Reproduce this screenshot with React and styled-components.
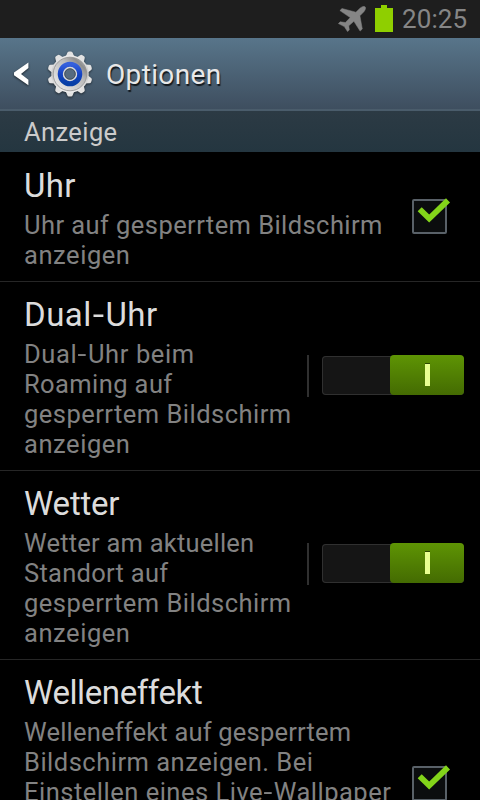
import React from 'react'
import styled, { createGlobalStyle } from 'styled-components'

const GlobalStyle = createGlobalStyle`
  * { box-sizing: border-box; }
  body {
    margin: 0;
    background: #000;
    font-family: Roboto, "Noto Sans", sans-serif;
    overflow: hidden;
  }
`

const settings = [
  {
    title: 'Uhr',
    spacing: 0.4,
    lines: [
      ['Uhr auf gesperrtem Bildschirm', 0.43],
      ['anzeigen', 0.55]
    ],
    control: 'checkbox',
    height: 130,
    top: 14
  },
  {
    title: 'Dual-Uhr',
    spacing: 0.5,
    lines: [
      ['Dual-Uhr beim', 0.6],
      ['Roaming auf', 0.4],
      ['gesperrtem Bildschirm', 0.47],
      ['anzeigen', 0.55]
    ],
    control: 'switch',
    height: 189,
    top: 13
  },
  {
    title: 'Wetter',
    spacing: -0.2,
    lines: [
      ['Wetter am aktuellen', 0.22],
      ['Standort auf', 0.28],
      ['gesperrtem Bildschirm', 0.47],
      ['anzeigen', 0.55]
    ],
    control: 'switch',
    height: 189,
    top: 13,
    lift: 2
  },
  {
    title: 'Welleneffekt',
    spacing: -0.4,
    lines: [
      ['Welleneffekt auf gesperrtem', 0.2],
      ['Bildschirm anzeigen. Bei', 0.5],
      ['Einstellen eines Live-Wallpaper', 0.5]
    ],
    control: 'checkbox',
    height: 248,
    top: 13
  }
]

const gearAngles = [0, 36, 72, 108, 144, 180, 216, 252, 288, 324]

const GearIcon = () => (
  <Gear viewBox="0 0 50 50">
    <defs>
      <linearGradient id="metal" x1="0" y1="0" x2="0" y2="1">
        <stop offset="0" stopColor="#ececec" />
        <stop offset="0.5" stopColor="#c6c6c6" />
        <stop offset="1" stopColor="#f0f0f0" />
      </linearGradient>
      <linearGradient id="shine" x1="0" y1="1" x2="1" y2="0">
        <stop offset="0" stopColor="#f4f4f4" />
        <stop offset="0.3" stopColor="#d6d6d6" />
        <stop offset="0.6" stopColor="#bdbdbd" />
        <stop offset="0.8" stopColor="#8e8e8e" />
        <stop offset="1" stopColor="#d6d6d6" />
      </linearGradient>
      <linearGradient id="blue" x1="0" y1="0" x2="0" y2="1">
        <stop offset="0" stopColor="#3560dc" />
        <stop offset="0.5" stopColor="#1443c4" />
        <stop offset="1" stopColor="#073fa6" />
      </linearGradient>
    </defs>
    {gearAngles.map(angle => (
      <path
        key={angle}
        d="M20.4 8.5 L22.2 4 Q22.6 2.4 24 2.4 H26 Q27.4 2.4 27.8 4 L29.6 8.5 Z"
        fill="#e2e2e2"
        transform={`rotate(${angle} 25 25)`}
      />
    ))}
    <circle cx="25" cy="25" r="18.8" fill="url(#metal)" />
    <circle cx="25" cy="25" r="16.8" fill="url(#shine)" stroke="#929292" strokeWidth="0.8" />
    <circle cx="25" cy="25" r="9.5" fill="none" stroke="url(#blue)" strokeWidth="5.6" />
    <circle cx="25" cy="25" r="6.4" fill="#566b7f" stroke="#d9dadb" strokeWidth="1.6" />
    <circle cx="25" cy="25" r="5.3" fill="none" stroke="#3c4650" strokeWidth="0.8" />
  </Gear>
)

// a hyphen gets its own span, it is drawn wider than the font's
const withHyphen = (text) => {
  const parts = text.split('-')
  if (parts.length === 1) return text
  return <>{parts[0]}<Hyphen>-</Hyphen>{parts[1]}</>
}

const CheckBox = () => (
  <Box>
    <CheckMark viewBox="0 0 36 27">
      <path d="M4.7 11.2 L14.2 20.5 L33 2.4" fill="none" stroke="#83d41a" strokeWidth="5.8" />
    </CheckMark>
  </Box>
)

const Toggle = ({ lift = 0 }) => (
  <ToggleArea $lift={lift}>
    <Track>
      <Thumb>
        <Mark />
      </Thumb>
    </Track>
  </ToggleArea>
)

const App = () => {
  return (
    <Screen>
      <GlobalStyle />
      <StatusBar>
        <Plane viewBox="0 0 28 26">
          <path
            d="M27.2 .9 C26.2 -.1 23.8 .6 22.2 2.1 L17.9 6.2 L4 2.5 L1.9 4.6 L12.2 11.6 L7.4 16.5 L2.2 15.8 L.4 17.6 L6.3 20.6 L9.5 25.6 L11.3 24 L10.8 19.8 L15.9 15.3 L22.1 25.1 L24.3 23 L21.9 9.8 L25.9 5.7 C27.4 3.8 28 1.8 27.2 .9 Z"
            fill="#858585"
            stroke="#858585"
            strokeWidth="0.5"
            strokeLinejoin="round"
          />
        </Plane>
        <Battery viewBox="0 0 18 27">
          <path d="M6 0 H12 V3 H18 V27 H0 V3 H6 Z" fill="#8fcf00" />
        </Battery>
        <Time>20:25</Time>
      </StatusBar>

      <Header>
        <Back viewBox="0 0 15 24">
          <path d="M14.4 0.6 V6 L7 11.9 L14.4 17.7 V23.2 L0 13.2 V10.6 Z" fill="#fff" />
        </Back>
        <GearIcon />
        <HeaderTitle>Optionen</HeaderTitle>
      </Header>

      <SectionTitle>Anzeige</SectionTitle>

      {settings.map(item => (
        <Row key={item.title} $height={item.height}>
          <Texts $top={item.top}>
            <Title $spacing={item.spacing}>{withHyphen(item.title)}</Title>
            {item.lines.map(([text, spacing]) => (
              <Line key={text} $spacing={spacing}>{withHyphen(text)}</Line>
            ))}
          </Texts>
          {item.control === 'checkbox' ? <CheckBox /> : <Toggle lift={item.lift} />}
        </Row>
      ))}
    </Screen>
  )
}

const Screen = styled.div`
display: flex;
flex-direction: column;
width: 480px;
height: 800px;
overflow: hidden;
background: #000;
`

const StatusBar = styled.div`
display: flex;
flex: none;
align-items: center;
justify-content: flex-end;
height: 38px;
padding-right: 12px;
background: #1e1e1e;
`
const Plane = styled.svg`
width: 28px;
height: 26px;
margin-right: 9px;
`
const Battery = styled.svg`
width: 18px;
height: 27px;
margin: 0 9px 1px 0;
`
const Time = styled.span`
width: 66px;
color: #868686;
font-size: 26px;
line-height: 38px;
letter-spacing: 0.1px;
white-space: nowrap;
`

const Header = styled.header`
display: flex;
flex: none;
align-items: center;
height: 73px;
padding-left: 14px;
background: linear-gradient(#58758a, #3e4e5f);
border-bottom: 2px solid #4a5c6b;
`
const Back = styled.svg`
width: 15px;
height: 24px;
margin: 1px 16px 0 0;
filter: drop-shadow(0 1px 1px rgba(0, 0, 0, 0.6));
`
const Gear = styled.svg`
width: 50px;
height: 50px;
margin-right: 11px;
filter: drop-shadow(0 1px 1px rgba(0, 0, 0, 0.55));
`
const HeaderTitle = styled.h1`
margin: 2px 0 0;
color: #e8e8e8;
font-size: 28px;
font-weight: 400;
line-height: 32px;
letter-spacing: 0.35px;
text-shadow: 1px 2px 1px rgba(0, 0, 0, 0.75);
`

const SectionTitle = styled.h2`
flex: none;
height: 41px;
margin: 0;
padding-left: 24px;
background: linear-gradient(#2c3a44, #243640);
color: #cbcbcb;
font-size: 25.5px;
font-weight: 400;
line-height: 42px;
letter-spacing: 0.4px;
`

const Row = styled.div`
display: flex;
flex: none;
align-items: center;
justify-content: space-between;
height: ${props => props.$height}px;
padding: 0 16px 0 24px;
border-bottom: 1px solid #262626;
`
const Texts = styled.div`
align-self: flex-start;
padding-top: ${props => props.$top}px;
white-space: nowrap;
`
const Title = styled.div`
margin-bottom: 5px;
color: #dcdcdc;
font-size: 33px;
line-height: 39px;
letter-spacing: ${props => props.$spacing}px;
`
const Line = styled.div`
color: #828282;
font-size: 25.5px;
line-height: 30px;
letter-spacing: ${props => props.$spacing}px;
`
const Hyphen = styled.span`
display: inline-block;
padding: 0 0.06em;
transform: scaleX(1.25);
`

const Box = styled.div`
position: relative;
flex: none;
width: 35px;
height: 35px;
margin-right: 17px;
background: #0b0d0e;
border: 2px solid #596168;
border-radius: 2px;
`
const CheckMark = styled.svg`
position: absolute;
left: 1px;
top: -3px;
width: 36px;
height: 27px;
`

const ToggleArea = styled.div`
display: flex;
flex: none;
align-items: center;
height: 42px;
margin-bottom: ${props => props.$lift}px;
padding-left: 13px;
border-left: 2px solid #303030;
`
const Track = styled.div`
display: flex;
align-items: center;
justify-content: flex-end;
width: 142px;
height: 39px;
margin-bottom: 2px;
background: #151515;
box-shadow: inset 0 0 0 1px #303030;
border-radius: 4px;
`
const Thumb = styled.div`
display: flex;
flex: none;
align-items: center;
justify-content: center;
width: 74px;
height: 40px;
background: linear-gradient(#5e9404, #446b02);
border-radius: 4px;
`
const Mark = styled.div`
width: 5px;
height: 23px;
margin-bottom: 2px;
background: #e8ff91;
border-top: 1px solid #2e4a00;
`

export default App
